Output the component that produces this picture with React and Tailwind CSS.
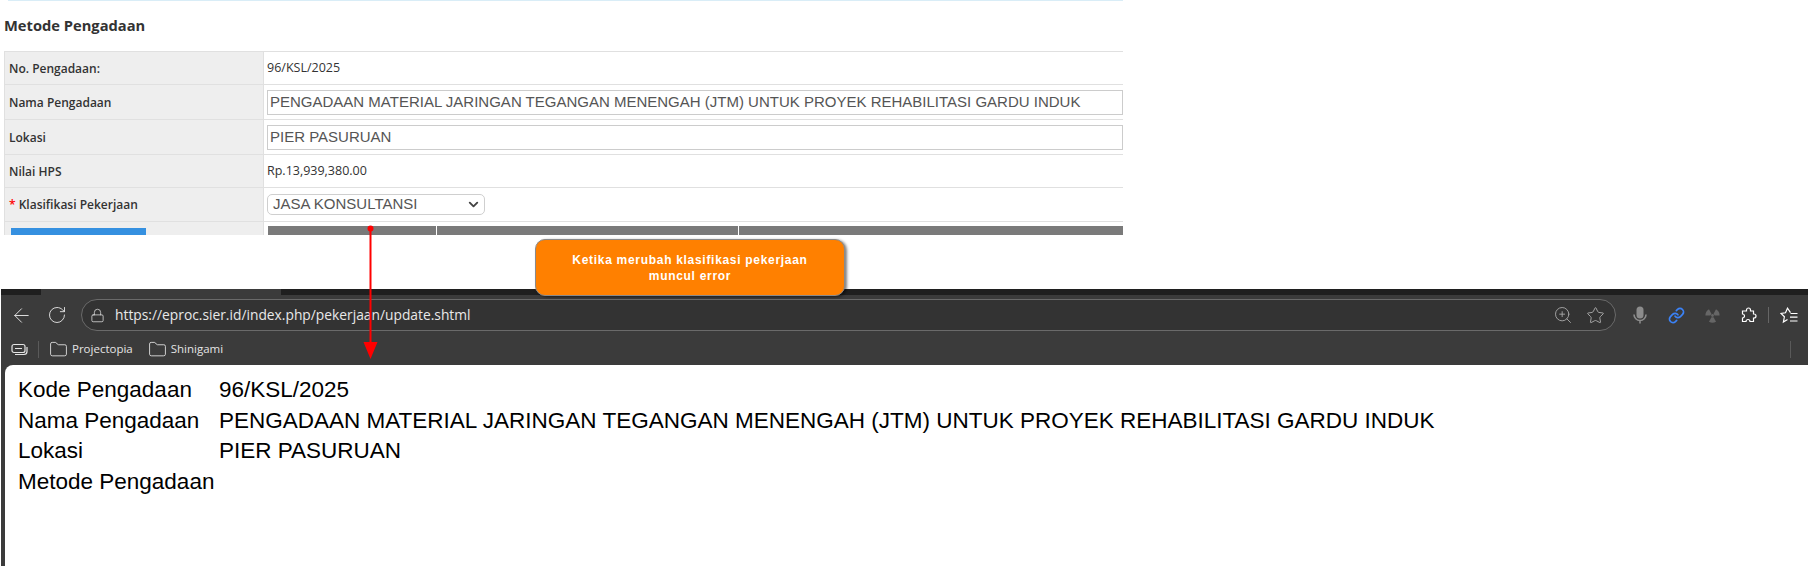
import React from "react";
import { ArrowLeft, RotateCw, Lock, ZoomIn, Star, Link, Folder, ChevronDown } from "lucide-react";

const labelCls = "w-[259px] shrink-0 bg-[#eeeeee] border-r border-[#e0e0e0] pl-[4px] pt-[1px] flex items-center text-[12px] font-semibold text-[#333] font-['Open_Sans',sans-serif]";
const Row = ({ h, label, children }) => (
  <div className={`flex border-b border-[#e0e0e0] ${h}`}>
    <div className={labelCls}>{label}</div>
    <div className="flex-1 min-w-0 pl-[3px] flex items-center">{children}</div>
  </div>
);
const Plain = ({ children }) => (
  <span className="pt-[1px] text-[12.5px] text-[#333] font-['Open_Sans',sans-serif]">{children}</span>
);
const Input = ({ children }) => (
  <div className="w-[900px] h-[25px] border border-[#cccccc] pl-[2px] flex items-center whitespace-nowrap text-[15px] text-[#555] font-['Liberation_Sans',sans-serif]">
    {children}
  </div>
);
const Line = ({ a, b }) => (
  <div className="flex h-[30.5px] items-center whitespace-nowrap">
    <span className="w-[201px] shrink-0">{a}</span>
    <span>{b}</span>
  </div>
);
const Slot = ({ children }) => <div className="w-[36px] flex items-center justify-center">{children}</div>;
const blade = "M13.5 14.6L17 20.66A10 10 0 0 1 7 20.66L10.5 14.6Z";

export default function App() {
  return (
    <div className="relative w-[1808px] h-[566px] overflow-hidden bg-white">
      {/* Top capture */}
      <div className="h-[289px] w-[1123px]">
        <div className="ml-[8px] h-[1px] bg-[#d9edf7]" />
        <h2 className="ml-[4px] mt-[15px] h-[18px] leading-[18px] text-[14.7px] font-bold text-[#333] font-['Open_Sans',sans-serif]">Metode Pengadaan</h2>
        <div className="ml-[4px] mt-[17px] h-[184px] overflow-hidden border-t border-l border-[#e0e0e0]">
          <Row h="h-[33px]" label="No. Pengadaan:"><Plain>96/KSL/2025</Plain></Row>
          <Row h="h-[35px]" label="Nama Pengadaan"><Input>PENGADAAN MATERIAL JARINGAN TEGANGAN MENENGAH (JTM) UNTUK PROYEK REHABILITASI GARDU INDUK</Input></Row>
          <Row h="h-[35px]" label="Lokasi"><Input>PIER PASURUAN</Input></Row>
          <Row h="h-[33px]" label="Nilai HPS"><Plain>Rp.13,939,380.00</Plain></Row>
          <Row h="h-[34px]" label={<span><span className="text-[#f00]">*</span> Klasifikasi Pekerjaan</span>}>
            <div className="w-[218px] h-[21px] border border-[#cfcfcf] rounded-[5px] pl-[5px] pr-[3px] flex items-center justify-between text-[15px] text-[#555] font-['Liberation_Sans',sans-serif]">
              <span>JASA KONSULTANSI</span>
              <ChevronDown size={15} strokeWidth={3} className="text-[#444]" />
            </div>
          </Row>
          <div className="flex h-[20px]">
            <div className="w-[259px] shrink-0 bg-[#eeeeee] border-r border-[#e0e0e0] pl-[6px] pt-[6px]">
              <div className="w-[135px] h-[20px] bg-[#3590e0]" />
            </div>
            <div className="flex-1 pl-[4px] pt-[4px] flex gap-[1px]">
              <div className="w-[168px] h-[20px] bg-[#7a7a7a]" />
              <div className="w-[301px] h-[20px] bg-[#7a7a7a]" />
              <div className="flex-1 h-[20px] bg-[#7a7a7a]" />
            </div>
          </div>
        </div>
      </div>

      {/* Browser */}
      <div className="h-[277px] ml-[1px] bg-[#3b3b3b] flex flex-col">
        <div className="h-[6px] flex shrink-0 bg-[#1f1f1f]">
          <div className="w-[40px]" />
          <div className="w-[240px] bg-[#3b3b3b]" />
        </div>
        <div className="h-[40px] shrink-0 flex items-center">
          <div className="ml-[2px]"><Slot><ArrowLeft size={23} strokeWidth={1} className="text-[#e4e4e4]" /></Slot></div>
          <Slot><RotateCw size={20} strokeWidth={1.1} className="text-[#e4e4e4]" /></Slot>
          <div className="ml-[6px] w-[1535px] h-[32px] rounded-full border border-[#6a6a6a] bg-[#333333] flex items-center">
            <Lock size={15} strokeWidth={1.2} className="ml-[8px] text-[#e4e4e4]" />
            <span className="ml-[10px] text-[13.8px] text-[#e8e8e8] font-['Open_Sans',sans-serif] whitespace-nowrap">https://eproc.sier.id/index.php/pekerjaan/update.shtml</span>
            <div className="ml-auto flex items-center gap-[13px] mr-[10px]">
              <ZoomIn size={20} strokeWidth={1.1} className="text-[#a8a8a8]" />
              <Star size={19} strokeWidth={1.2} className="text-[#a8a8a8]" />
            </div>
          </div>
          <div className="ml-[6px] flex items-center">
            <Slot>
              <svg width="14" height="18" viewBox="0 0 14 18" fill="none">
                <rect x="3.5" y="0.5" width="7" height="12" rx="3.5" fill="#8c8c8c" />
                <path d="M1 8.5a6 6 0 0 0 12 0M7 14.5V17.5" stroke="#8c8c8c" strokeWidth="1.6" />
              </svg>
            </Slot>
            <Slot><Link size={17} strokeWidth={2.4} className="text-[#3b82f6]" /></Slot>
            <Slot>
              <svg width="17" height="17" viewBox="0 0 24 24" fill="#666666">
                <circle cx="12" cy="12" r="2" />
                <path d={blade} />
                <path d={blade} transform="rotate(120 12 12)" />
                <path d={blade} transform="rotate(240 12 12)" />
              </svg>
            </Slot>
            <Slot>
              <svg width="17" height="17" viewBox="0 0 17 17" fill="none" stroke="#fff" strokeWidth="1.2">
                <path d="M6.5 3a2 2 0 0 1 4 0V4h3v3h.5a2 2 0 0 1 0 4h-.5v3.5h-3.5a2 2 0 0 0-4 0H2.5V11a2 2 0 0 0 0-4V4h4Z" />
              </svg>
            </Slot>
          </div>
          <div className="ml-[2px] w-[1px] h-[16px] bg-[#666]" />
          <div className="w-[39px] flex justify-center">
            <svg width="18" height="17" viewBox="0 0 18 17" fill="none" stroke="#fff" strokeWidth="1.2">
              <path d="M10.5 5.6L7.5 1.2L5.5 5.8L1 6.4L4.4 9.8L3.4 15L7.5 12.4" />
              <path d="M10.5 6.5h7M10 10.2h7.5M10 14h7.5" />
            </svg>
          </div>
        </div>
        <div className="h-[30px] pb-[2px] shrink-0 flex items-center text-[11.5px] text-[#e4e4e4] font-['Open_Sans',sans-serif]">
          <svg width="17" height="13" viewBox="0 0 17 13" className="ml-[10px]" fill="none" stroke="#e4e4e4" strokeWidth="1.2">
            <rect x="1" y="1.5" width="13" height="8" rx="2" />
            <path d="M4 5.5h7M4 11.5h9a3 3 0 0 0 3-3V4" />
          </svg>
          <div className="ml-[10px] w-[1px] h-[17px] bg-[#5a5a5a]" />
          <Folder size={19} strokeWidth={1.1} className="ml-[10px]" />
          <span className="ml-[4px]">Projectopia</span>
          <Folder size={19} strokeWidth={1.1} className="ml-[15px]" />
          <span className="ml-[4px]">Shinigami</span>
          <div className="ml-auto mr-[17px] w-[1px] h-[17px] bg-[#5a5a5a]" />
        </div>
        <div className="flex-1 ml-[4px] bg-white rounded-tl-[8px] pl-[13px] pt-[10px] text-[22.5px] text-black font-['Liberation_Sans',sans-serif]">
          <Line a="Kode Pengadaan" b="96/KSL/2025" />
          <Line a="Nama Pengadaan" b="PENGADAAN MATERIAL JARINGAN TEGANGAN MENENGAH (JTM) UNTUK PROYEK REHABILITASI GARDU INDUK" />
          <Line a="Lokasi" b="PIER PASURUAN" />
          <Line a="Metode Pengadaan" b="" />
        </div>
      </div>

      {/* Callout */}
      <div className="absolute left-[535px] top-[239px] w-[310px] h-[57px] rounded-[10px] bg-[#ff8000] border border-[#8a8a8a] shadow-[2px_1px_3px_rgba(0,0,0,0.5)] flex items-center justify-center text-center text-white text-[12px] leading-[16px] font-bold tracking-[0.7px] font-['Liberation_Sans',sans-serif]">
        <span>Ketika merubah klasifikasi pekerjaan<br />muncul error</span>
      </div>

      {/* Arrow */}
      <svg className="absolute left-[360px] top-[222px]" width="24" height="140" viewBox="0 0 24 140">
        <circle cx="10.5" cy="6.5" r="3" fill="#f00" />
        <path d="M10.5 6.5V122" stroke="#f00" strokeWidth="2" />
        <path d="M3.5 120h14l-7 17z" fill="#f00" />
      </svg>
    </div>
  );
}
